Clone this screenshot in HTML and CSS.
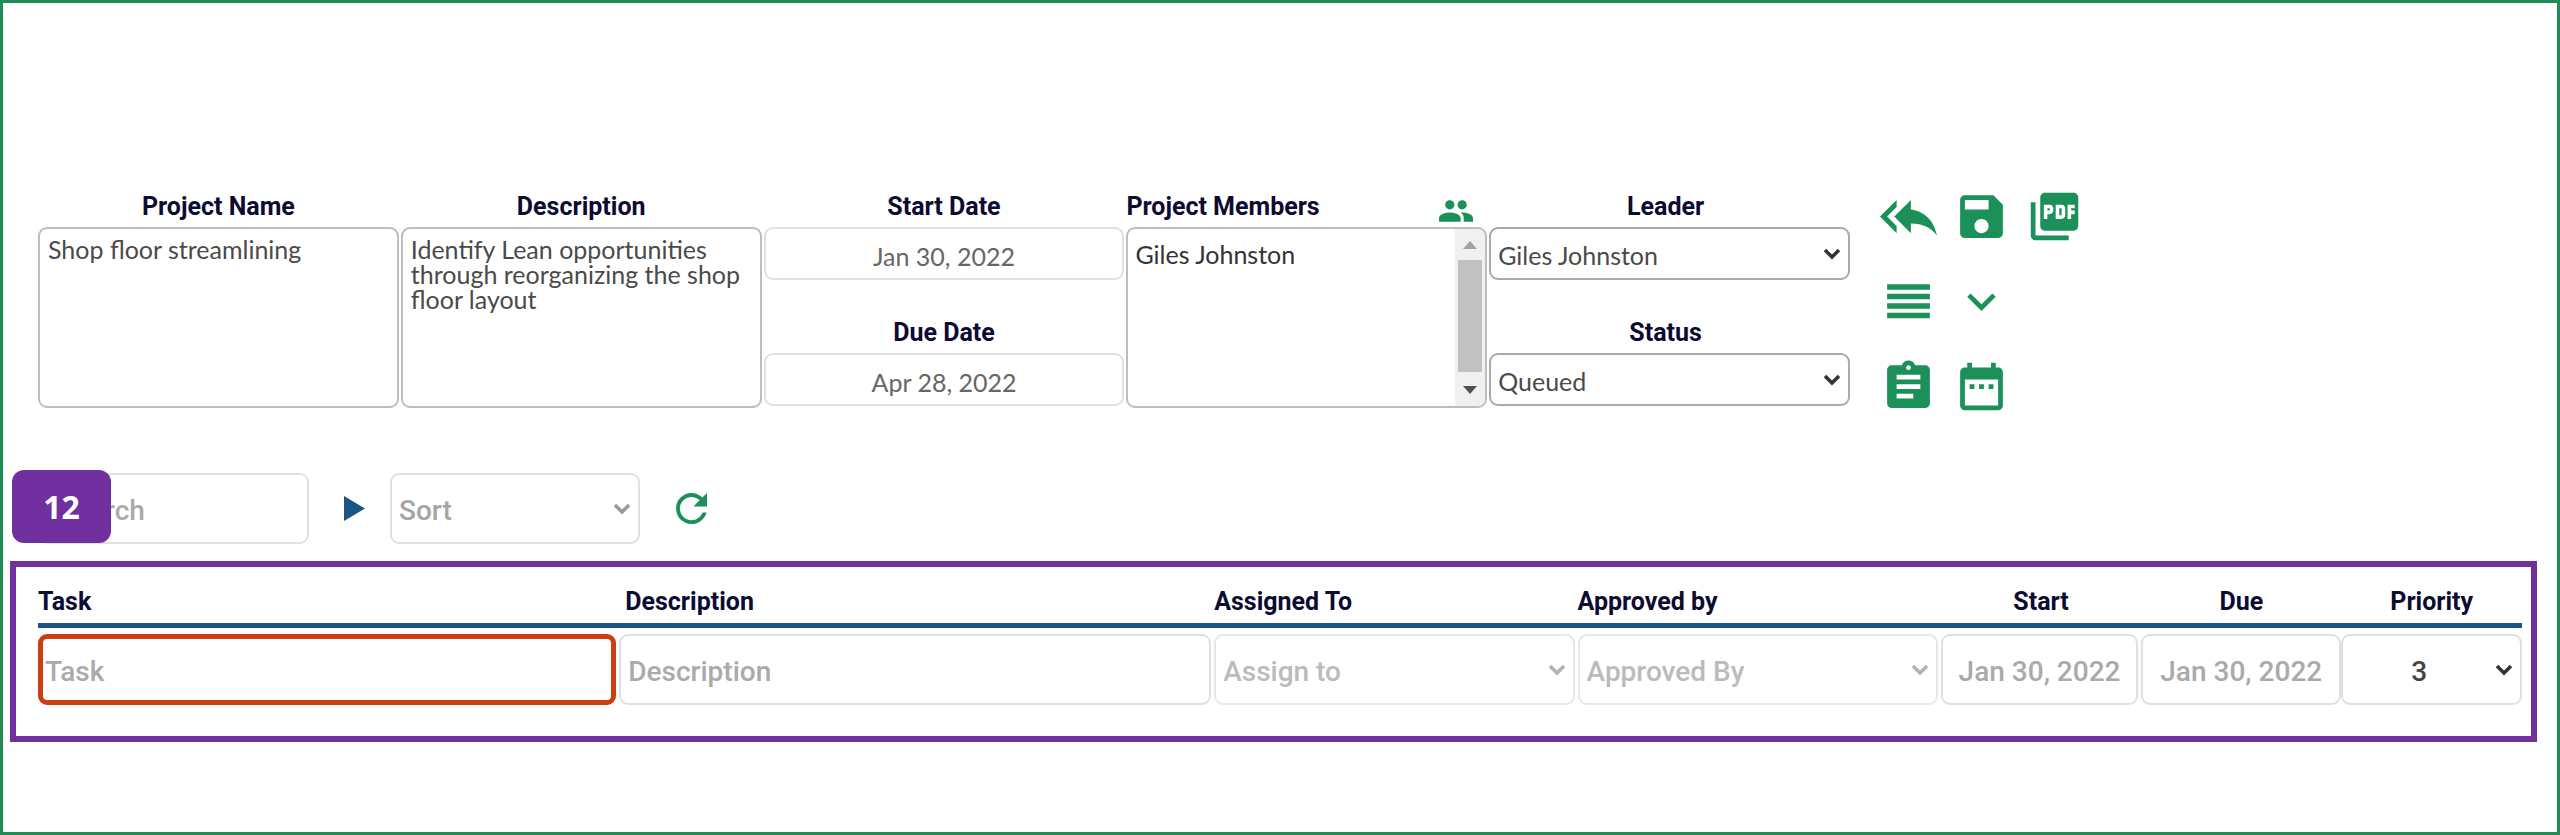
FILE: index.html
```html
<!DOCTYPE html>
<html lang="en">
<head>
<meta charset="utf-8">
<title>Project</title>
<link rel="stylesheet" href="styles.css">
</head>
<body>
<main class="page">
  <section class="project">
    <form class="details">
      <div class="field">
        <label class="label" for="name">Project Name</label>
        <textarea class="control area" id="name">Shop floor streamlining</textarea>
      </div>
      <div class="field">
        <label class="label" for="desc">Description</label>
        <textarea class="control area" id="desc">Identify Lean opportunities through reorganizing the shop floor layout</textarea>
      </div>
      <div class="stack">
        <div class="field">
          <label class="label" for="start">Start Date</label>
          <input class="control date" id="start" type="text" value="Jan 30, 2022">
        </div>
        <div class="field">
          <label class="label" for="due">Due Date</label>
          <input class="control date" id="due" type="text" value="Apr 28, 2022">
        </div>
      </div>
      <div class="field">
        <div class="members-head">
          <label class="label" for="members">Project Members</label>
          <button class="icon-button" type="button" aria-label="Edit members">
            <svg class="icon-people" viewBox="1 5 22 14"><path d="M16 11c1.66 0 2.990-1.340 2.990-3S17.660 5 16 5c-1.660 0-3 1.340-3 3s1.340 3 3 3zm-8 0c1.660 0 2.990-1.340 2.990-3S9.660 5 8 5C6.340 5 5 6.340 5 8s1.340 3 3 3zm0 2c-2.330 0-7 1.170-7 3.500V19h14v-2.500c0-2.330-4.670-3.500-7-3.500zm8 0c-.29 0-.62.02-.97.05 1.160.84 1.970 1.970 1.970 3.450V19h6v-2.500c0-2.330-4.670-3.500-7-3.500z"/></svg>
          </button>
        </div>
        <div class="control members">
          <select class="members-list" id="members" multiple>
            <option>Giles Johnston</option>
          </select>
          <div class="scrollbar">
            <svg class="arrow arrow-up" viewBox="0 0 14 8"><path d="M7 0l7 8H0z"/></svg>
            <div class="thumb"></div>
            <svg class="arrow" viewBox="0 0 14 8"><path d="M7 8l7-8H0z"/></svg>
          </div>
        </div>
      </div>
      <div class="stack">
        <div class="field">
          <label class="label label-select" for="leader">Leader</label>
          <div class="select">
            <select class="control choice" id="leader"><option>Giles Johnston</option></select>
            <svg class="chevron" viewBox="0 0 18 12"><path d="M2 2l7 7 7-7"/></svg>
          </div>
        </div>
        <div class="field">
          <label class="label label-select" for="status">Status</label>
          <div class="select">
            <select class="control choice" id="status"><option>Queued</option></select>
            <svg class="chevron" viewBox="0 0 18 12"><path d="M2 2l7 7 7-7"/></svg>
          </div>
        </div>
      </div>
    </form>
    <div class="actions">
      <button class="icon-button" aria-label="Back"><svg class="icon" viewBox="0 0 24 24"><path d="M7 8V5l-7 7 7 7v-3l-4-4 4-4zm6 1V5l-7 7 7 7v-4.100c5 0 8.500 1.600 11 5.100-1-5-4-10-11-11z"/></svg></button>
      <button class="icon-button" aria-label="Save"><svg class="icon" viewBox="0 0 24 24"><path d="M17 3H5c-1.110 0-2 .9-2 2v14c0 1.100.89 2 2 2h14c1.100 0 2-.9 2-2V7l-4-4zm-5 16c-1.660 0-3-1.340-3-3s1.340-3 3-3 3 1.340 3 3-1.340 3-3 3zm3-10H5V5h10v4z"/></svg></button>
      <button class="icon-button" aria-label="Export PDF"><svg class="icon" viewBox="0 0 24 24"><path d="M20 2H8c-1.100 0-2 .9-2 2v12c0 1.100.9 2 2 2h12c1.100 0 2-.9 2-2V4c0-1.100-.9-2-2-2zm-8.500 7.500c0 .83-.67 1.500-1.500 1.500H9v2H7.500V7H10c.83 0 1.500.67 1.500 1.500v1zm5 2c0 .83-.67 1.500-1.500 1.500h-2.500V7H15c.83 0 1.500.67 1.500 1.500v3zm4-3H19v1h1.500V11H19v2h-1.500V7h3v1.500zM9 9.500h1v-1H9v1zM4 6H2v14c0 1.100.9 2 2 2h14v-2H4V6zm10 5.500h1v-3h-1v3z"/></svg></button>
      <button class="icon-button first" aria-label="List"><svg class="icon" viewBox="0 0 24 24"><path d="M3 15h18v-2.300H3v2.300zm0 4h18v-2.300H3v2.300zm0-8h18V8.700H3v2.300zm0-6.300v2.300h18V4.700H3z"/></svg></button>
      <button class="icon-button" aria-label="Expand"><svg class="icon" viewBox="0 0 24 24"><path d="M16.590 8.590L12 13.170 7.410 8.590 6 10l6 6 6-6z"/></svg></button>
      <button class="icon-button first" aria-label="Notes"><svg class="icon" viewBox="0 0 24 24"><path d="M19 3h-4.180C14.400 1.840 13.300 1 12 1c-1.300 0-2.400.84-2.820 2H5c-1.100 0-2 .9-2 2v14c0 1.100.9 2 2 2h14c1.100 0 2-.9 2-2V5c0-1.100-.9-2-2-2zm-7 0c.55 0 1 .45 1 1s-.45 1-1 1-1-.45-1-1 .45-1 1-1zm2 14H7v-2h7v2zm3-4H7v-2h10v2zm0-4H7V7h10v2z"/></svg></button>
      <button class="icon-button" aria-label="Calendar"><svg class="icon" viewBox="0 0 24 24"><path d="M9 11H7v2h2v-2zm4 0h-2v2h2v-2zm4 0h-2v2h2v-2zm2-7h-1V2h-2v2H8V2H6v2H5c-1.110 0-1.990.9-1.990 2L3 20c0 1.100.89 2 2 2h14c1.100 0 2-.9 2-2V6c0-1.100-.9-2-2-2zm0 16H5V9h14v11z"/></svg></button>
    </div>
  </section>

  <section class="filters">
    <span class="badge">12</span>
    <input class="control search" type="text" placeholder="Search" aria-label="Search">
    <button class="icon-button" aria-label="Run search"><svg class="icon-play" viewBox="0 0 21 25"><path d="M0 0l21 12.500L0 25z"/></svg></button>
    <div class="select sort">
      <select class="control choice pale" aria-label="Sort"><option>Sort</option></select>
      <svg class="chevron chevron-grey" viewBox="0 0 18 12"><path d="M2 2l7 7 7-7"/></svg>
    </div>
    <button class="icon-button" aria-label="Refresh"><svg class="icon-refresh" viewBox="4 4 16 16"><path d="M17.650 6.350C16.200 4.900 14.210 4 12 4c-4.420 0-7.990 3.580-7.990 8s3.570 8 7.990 8c3.730 0 6.840-2.550 7.730-6h-2.080c-.82 2.330-3.040 4-5.650 4-3.310 0-6-2.690-6-6s2.690-6 6-6c1.660 0 3.140.69 4.220 1.780L13 11h7V4l-2.350 2.350z"/></svg></button>
  </section>

  <section class="tasks">
    <table class="task-table">
      <thead>
        <tr>
          <th class="col-task">Task</th>
          <th class="col-desc">Description</th>
          <th class="col-assigned">Assigned To</th>
          <th class="col-approved">Approved by</th>
          <th class="col-start">Start</th>
          <th class="col-due">Due</th>
          <th class="col-priority">Priority</th>
        </tr>
      </thead>
      <tbody>
        <tr>
          <td><input class="control cell invalid" type="text" placeholder="Task" aria-label="Task"></td>
          <td><input class="control cell" type="text" placeholder="Description" aria-label="Description"></td>
          <td><div class="select faded">
            <select class="control choice pale" aria-label="Assigned To"><option>Assign to</option></select>
            <svg class="chevron chevron-grey" viewBox="0 0 18 12"><path d="M2 2l7 7 7-7"/></svg>
          </div></td>
          <td><div class="select faded">
            <select class="control choice pale" aria-label="Approved by"><option>Approved By</option></select>
            <svg class="chevron chevron-grey" viewBox="0 0 18 12"><path d="M2 2l7 7 7-7"/></svg>
          </div></td>
          <td><input class="control cell cell-date" type="text" placeholder="Jan 30, 2022" aria-label="Start"></td>
          <td class="cell-due"><input class="control cell cell-date" type="text" placeholder="Jan 30, 2022" aria-label="Due"></td>
          <td><div class="select">
            <select class="control choice pale priority" aria-label="Priority"><option>3</option></select>
            <svg class="chevron" viewBox="0 0 18 12"><path d="M2 2l7 7 7-7"/></svg>
          </div></td>
        </tr>
      </tbody>
    </table>
  </section>
</main>
</body>
</html>
```

FILE: styles.css
```css
* {
  box-sizing: border-box;
}

body {
  margin: 0;
  background: #fff;
  font-family: Roboto, "Liberation Sans", sans-serif;
}

.page {
  min-height: 100vh;
  padding: 185px 20px 0 7px;
  border: 3px solid #238b57;
}

/* Project form */

.project {
  display: flex;
  gap: 30px;
  padding-left: 28px;
}

.details {
  display: grid;
  flex: 0 1 1812px;
  grid-template-columns: repeat(5, minmax(0, 1fr));
  gap: 2px;
  align-items: start;
  padding-top: 4px;
}

.field {
  display: flex;
  flex-direction: column;
  gap: 5px;
}

.stack {
  display: flex;
  flex-direction: column;
  gap: 38px;
}

.label {
  color: #0c0b31;
  font-size: 25px;
  font-weight: 700;
  line-height: 30px;
  text-align: center;
}

.label-select {
  padding-right: 8px;
}

.control {
  width: 100%;
  margin: 0;
  border: 2px solid #bdbdbd;
  border-radius: 9px;
  background: #fff;
  color: #4a4a4a;
  font-family: Lato, sans-serif;
  font-size: 25px;
  outline: 0;
}

.area {
  height: 181px;
  padding: 8px;
  line-height: 25px;
  resize: none;
}

.date {
  height: 53px;
  padding: 4px 8px 0;
  border-color: #e0e0e0;
  color: #666;
  text-align: center;
}

.members-head {
  display: flex;
  align-items: flex-end;
  justify-content: space-between;
  padding-right: 14px;
}

.members {
  display: flex;
  height: 181px;
  overflow: hidden;
}

.members-list {
  flex: 1;
  padding: 10px 5px;
  overflow: hidden;
  border: 0;
  background: none;
  color: #333;
  font: inherit;
  outline: 0;
}

.scrollbar {
  display: flex;
  flex-direction: column;
  align-items: center;
  justify-content: space-between;
  width: 30px;
  padding: 12px 0;
  background: #f0f0f0;
}

.thumb {
  width: 24px;
  height: 112px;
  margin-bottom: 4px;
  background: #c1c1c1;
}

.arrow {
  width: 14px;
  height: 8px;
  fill: #505050;
}

.arrow-up {
  fill: #a3a3a3;
}

/* Drop-downs */

.select {
  display: grid;
  align-items: center;
}

.select > * {
  grid-area: 1 / 1;
}

.choice {
  height: 53px;
  padding: 3px 36px 0 7px;
  border-color: #aaa;
  appearance: none;
}

.chevron {
  justify-self: end;
  width: 18px;
  height: 12px;
  margin: 0 9px 0 0;
  fill: none;
  pointer-events: none;
  stroke: #333;
  stroke-width: 3.5;
}

.chevron-grey {
  stroke: #999;
}

/* Icon buttons */

.icon-button {
  display: flex;
  padding: 0;
  border: 0;
  background: none;
  fill: #1b9058;
}

.icon {
  width: 57px;
  height: 57px;
}

.icon-people {
  width: 34px;
  height: 22px;
}

.actions {
  display: grid;
  grid-template-columns: repeat(3, 57px);
  gap: 28px 16px;
  align-content: start;
}

.first {
  grid-column: 1;
}

/* Search and sort */

.filters {
  position: relative;
  display: flex;
  align-items: center;
  margin-top: 58px;
  padding-left: 28px;
}

.badge {
  position: absolute;
  top: -3px;
  left: 2px;
  width: 99px;
  border-radius: 12px;
  background: #7030a0;
  color: #fff;
  font-family: "Open Sans", sans-serif;
  font-size: 32px;
  font-weight: 700;
  line-height: 73px;
  text-align: center;
}

.search,
.cell,
.pale {
  height: 71px;
  padding: 4px 7px 0;
  border-color: #e0e0e0;
  color: #a5a5a5;
  font-family: Roboto, sans-serif;
  font-size: 28px;
  font-weight: 500;
}

.control::placeholder {
  color: #aaa;
  opacity: 1;
}

.search {
  width: 271px;
  padding-left: 18px;
}

.icon-play {
  width: 21px;
  height: 25px;
  margin: 0 25px 0 35px;
  fill: #1b5583;
}

.sort {
  width: 250px;
  margin-right: 36px;
}

.icon-refresh {
  width: 31px;
  height: 31px;
}

/* Task table */

.tasks {
  margin-top: 17px;
  padding: 20px 9px 31px 22px;
  border: 6px solid #7030a0;
}

.task-table {
  width: 100%;
  border-spacing: 0;
  table-layout: fixed;
}

.task-table th {
  padding: 0 0 6px;
  border-bottom: 5px solid #1b5583;
  color: #0c0b31;
  font-size: 25px;
  font-weight: 700;
  line-height: 30px;
  text-align: center;
}

.task-table td {
  padding: 6px 3px 0 0;
}

.task-table .cell-due,
.task-table td:last-child {
  padding-right: 0;
}

.task-table .col-task,
.task-table .col-desc,
.task-table .col-assigned,
.task-table .col-approved {
  text-align: left;
}

.task-table .col-desc {
  padding-left: 6px;
}

.col-task {
  width: 23.4%;
}

.col-desc {
  width: 23.95%;
}

.col-assigned,
.col-approved {
  width: 14.63%;
}

.col-start,
.col-due {
  width: 8.06%;
}

.cell {
  display: block;
}

.invalid {
  padding: 4px 2px 0;
  border: 5px solid #cc3d10;
}

.cell-date {
  text-align: center;
}

.faded {
  opacity: 0.75;
}

.priority {
  padding-right: 32px;
  color: #444;
  text-align: center;
  text-align-last: center;
}
```
